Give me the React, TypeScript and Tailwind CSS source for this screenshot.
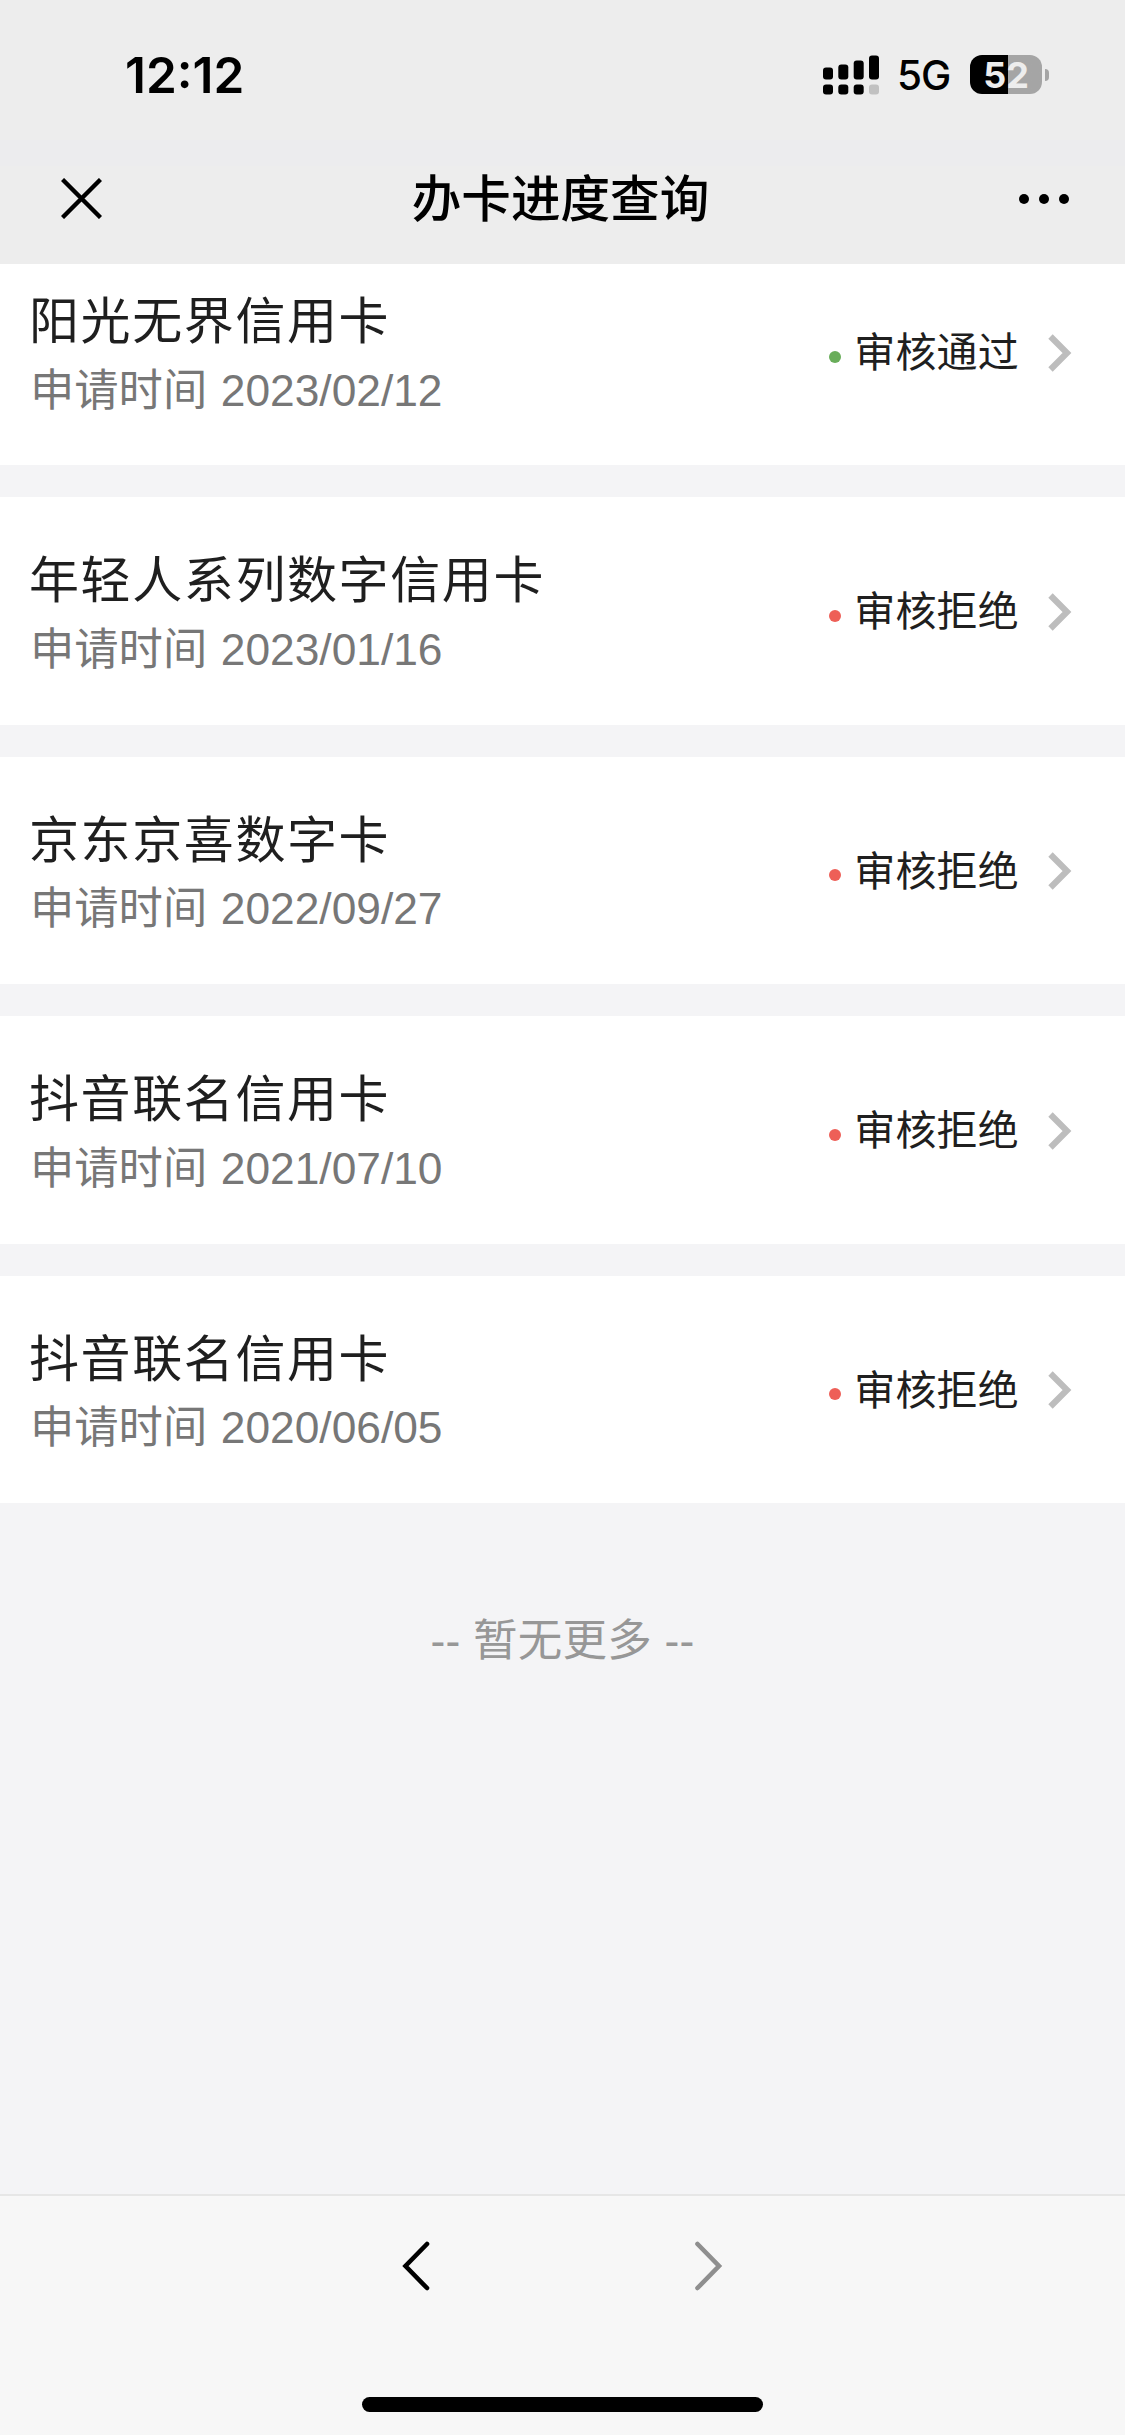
type Status = "approved" | "rejected";

interface Application {
  id: number;
  name: string;
  date: string;
  status: Status;
}

const applications: Application[] = [
  { id: 1, name: "阳光无界信用卡", date: "2023/02/12", status: "approved" },
  { id: 2, name: "年轻人系列数字信用卡", date: "2023/01/16", status: "rejected" },
  { id: 3, name: "京东京喜数字卡", date: "2022/09/27", status: "rejected" },
  { id: 4, name: "抖音联名信用卡", date: "2021/07/10", status: "rejected" },
  { id: 5, name: "抖音联名信用卡", date: "2020/06/05", status: "rejected" },
];

function SignalIcon() {
  return (
    <svg width="56" height="40" viewBox="0 0 56 40" className="shrink-0">
      <rect x="0" y="12.5" width="10" height="12" rx="3" />
      <rect x="15.3" y="9.5" width="10" height="15" rx="3" />
      <rect x="30.7" y="5.5" width="10" height="19" rx="3" />
      <rect x="46" y="0.5" width="10" height="24" rx="3" />
      <rect x="0" y="29.5" width="10" height="10" rx="3" />
      <rect x="15.3" y="29.5" width="10" height="10" rx="3" />
      <rect x="30.7" y="29.5" width="10" height="10" rx="3" />
      <rect x="46" y="29.5" width="10" height="10" rx="3" fill="#c1c1c1" />
    </svg>
  );
}

function Battery() {
  return (
    <div className="flex items-center gap-[3px]">
      <div className="flex h-[39px] w-[72px] justify-center rounded-[12px] bg-linear-to-r from-black from-[38px] to-[#a5a5a5] to-[38px] text-[36px] leading-[40px] font-bold text-[#ededed]">
        52
      </div>
      <div className="h-3 w-1 rounded-r-full bg-[#a5a5a5]" />
    </div>
  );
}

function StatusBar() {
  return (
    <div className="flex h-[140px] items-start justify-between bg-[#ededed] pt-[55px] pr-[76px] pl-[125px] font-['Inter',sans-serif] text-black">
      <div className="text-[49.5px] leading-[41px] font-semibold">12:12</div>
      <div className="flex h-[39px] items-center">
        <SignalIcon />
        <span className="mt-[2px] ml-[18px] w-[54px] text-[40.5px] leading-[44px] font-medium tracking-[-1px]">5G</span>
        <div className="ml-[19px]">
          <Battery />
        </div>
      </div>
    </div>
  );
}

function NavBar() {
  return (
    <div className="flex h-[98px] items-start justify-between bg-[#ededed] pt-3 pr-14 pl-[61px]">
      <svg width="41" height="41" viewBox="0 0 41 41" stroke="#000" strokeWidth="4.4">
        <path d="M1.5 1.5 39.5 39.5M39.5 1.5 1.5 39.5" />
      </svg>
      <h1 className="text-[49.6px] leading-[45px] font-medium text-black">办卡进度查询</h1>
      <svg width="50" height="42" viewBox="0 0 50 42" className="mt-px">
        <circle cx="5" cy="20" r="5" />
        <circle cx="25" cy="20" r="5" />
        <circle cx="45" cy="20" r="5" />
      </svg>
    </div>
  );
}

function ApplicationCard({ item }: { item: Application }) {
  const approved = item.status === "approved";

  return (
    <div className="flex h-[227.4px] shrink-0 items-start justify-between bg-white pr-[53px] pl-[29px]">
      <div className="pt-[51px]">
        <h2 className="text-[50px] leading-[66px] tracking-[1.6px] text-[#1f1f1f]">{item.name}</h2>
        <p className="mt-[2.5px] pl-px text-[44.3px] leading-[66px] text-[#777] [word-spacing:1.3px]">
          申请时间 {item.date}
        </p>
      </div>
      <div className="flex items-center pt-[84px]">
        <span className={`mt-2 h-3 w-3 rounded-full ${approved ? "bg-[#69ad5a]" : "bg-[#ee5f57]"}`} />
        <span className="mt-px ml-[13px] text-[41px] leading-[60px] tracking-[0.2px] text-[#1f1f1f]">
          {approved ? "审核通过" : "审核拒绝"}
        </span>
        <svg width="24" height="38" viewBox="0 0 24 38" fill="none" stroke="#bdbdbd" strokeWidth="6.2" className="ml-[29px]">
          <path d="M2.5 2.5 19 19 2.5 35.5" />
        </svg>
      </div>
    </div>
  );
}

function BottomBar() {
  return (
    <div className="flex h-[241px] flex-col items-center justify-between border-t-2 border-[#e6e6e6] bg-[#f7f7f7] pt-[45px] pb-[23px]">
      <div className="flex w-[321px] justify-between">
        <svg width="28" height="50" viewBox="0 0 28 50" fill="none" stroke="#000" strokeWidth="4.6" strokeLinecap="round">
          <path d="M25 3 3.5 25 25 47" />
        </svg>
        <svg width="28" height="50" viewBox="0 0 28 50" fill="none" stroke="#8f8f8f" strokeWidth="4.6" strokeLinecap="round">
          <path d="M2.5 3 24 25 2.5 47" />
        </svg>
      </div>
      <div className="h-[15px] w-[401px] rounded-full bg-black" />
    </div>
  );
}

export default function App() {
  return (
    <div className="flex h-[2435px] w-[1125px] flex-col overflow-hidden bg-[#f4f4f6] font-['Liberation_Sans','Noto_Sans_CJK_SC',sans-serif]">
      <StatusBar />
      <div className="h-[26px] bg-[#ececee]" />
      <NavBar />

      {/* list is scrolled a little, so the first card is cut by the header */}
      <main className="min-h-0 flex-1 overflow-hidden">
        <div className="-mt-[26px] flex flex-col gap-8">
          {applications.map((item) => (
            <ApplicationCard key={item.id} item={item} />
          ))}
        </div>
        <p className="mt-[105px] text-center text-[44.5px] leading-[66px] tracking-[0.2px] text-[#979797]">
          -- 暂无更多 --
        </p>
      </main>

      <BottomBar />
    </div>
  );
}
